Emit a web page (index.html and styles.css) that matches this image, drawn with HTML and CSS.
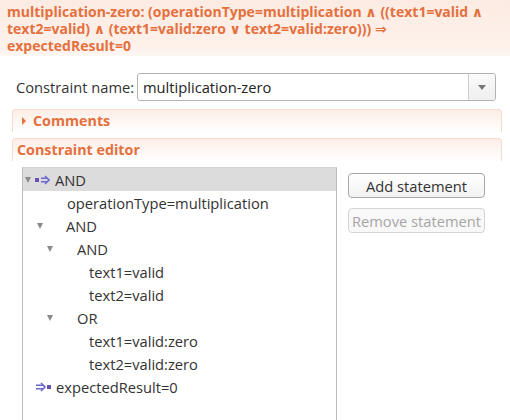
FILE: index.html
```html
<!DOCTYPE html>
<html>
<head>
<meta charset="utf-8">
<link rel="stylesheet" href="styles.css">
</head>
<body>
<div class="title">multiplication-zero: (operationType=multiplication ∧ ((text1=valid ∧ text2=valid) ∧ (text1=valid:zero ∨ text2=valid:zero))) ⇒ expectedResult=0</div>
<div class="content">
  <div class="name-row">
    <span class="label">Constraint name:</span>
    <div class="combo">
      <span class="combo-text">multiplication-zero</span>
      <span class="combo-btn"><span class="combo-arrow"></span></span>
    </div>
  </div>
  <div class="section">
    <span class="twisty"></span><span class="section-title">Comments</span>
  </div>
  <div class="section section-editor">
    <span class="section-title">Constraint editor</span>
  </div>
  <div class="editor">
    <div class="tree">
      <div class="row selected lvl0">
        <span class="tri"></span>
        <svg class="icon" width="16" height="10" viewBox="0 0 16 10"><rect x="0" y="3" width="4" height="4" fill="#6a4fb0"/><path d="M6 3.2h6M6 6.8h6" stroke="#6868d0" stroke-width="1.6"/><path d="M10 1l4 4-4 4" fill="none" stroke="#6868d0" stroke-width="1.6"/></svg>
        <span class="txt">AND</span>
      </div>
      <div class="row"><span class="txt ind67">operationType=multiplication</span></div>
      <div class="row lvl1"><span class="tri"></span><span class="txt">AND</span></div>
      <div class="row lvl2"><span class="tri"></span><span class="txt">AND</span></div>
      <div class="row"><span class="txt ind89">text1=valid</span></div>
      <div class="row"><span class="txt ind89">text2=valid</span></div>
      <div class="row lvl2"><span class="tri"></span><span class="txt">OR</span></div>
      <div class="row"><span class="txt ind89">text1=valid:zero</span></div>
      <div class="row"><span class="txt ind89">text2=valid:zero</span></div>
      <div class="row lvl0b">
        <svg class="icon" width="16" height="10" viewBox="0 0 16 10"><path d="M0 3.2h7M0 6.8h7" stroke="#6868d0" stroke-width="1.6"/><path d="M5 1l4 4-4 4" fill="none" stroke="#6868d0" stroke-width="1.6"/><rect x="11" y="3" width="4" height="4" fill="#6a4fb0"/></svg>
        <span class="txt">expectedResult=0</span>
      </div>
    </div>
    <div class="buttons">
      <button class="btn">Add statement</button>
      <button class="btn disabled">Remove statement</button>
    </div>
  </div>
</div>
</body>
</html>
```
FILE: styles.css
```css
html, body {
  margin: 0;
  padding: 0;
  background: #ffffff;
  width: 510px;
  height: 420px;
  overflow: hidden;
  font-family: "Open Sans", "DejaVu Sans", sans-serif;
}
.title {
  background: linear-gradient(#fcebe2, #fdf1eb 85%, #fef7f3);
  color: #e4703e;
  font-weight: bold;
  font-size: 14px;
  line-height: 17px;
  padding: 3px 7px 2px 7px;
}
.content {
  padding: 17px 8px 0 12px;
}
.name-row {
  display: flex;
  align-items: center;
  gap: 6px;
  padding-left: 4px;
  height: 28px;
  margin-bottom: 8px;
}
.label {
  font-size: 14.7px;
  line-height: 20px;
  color: #333;
  width: 115px;
  white-space: nowrap;
}
.combo {
  display: flex;
  width: 357px;
  height: 26px;
  border: 1px solid #b3b3b3;
  border-radius: 3px;
  background: #fff;
}
.combo-text {
  flex: 1;
  font-size: 14.7px;
  color: #222;
  line-height: 26px;
  padding-left: 5px;
}
.combo-btn {
  width: 26px;
  border-left: 1px solid #cfcfcf;
  display: flex;
  align-items: center;
  justify-content: center;
  background: linear-gradient(#fafafa, #efefef);
  border-radius: 0 3px 3px 0;
}
.combo-arrow {
  width: 0; height: 0;
  border-left: 4px solid transparent;
  border-right: 4px solid transparent;
  border-top: 5px solid #777;
}
.section {
  width: 488px;
  height: 22px;
  border: 1px solid #f6dccf;
  border-bottom: none;
  border-radius: 4px 4px 0 0;
  background: linear-gradient(#fdeee6, #fff);
  display: flex;
  align-items: center;
  margin-bottom: 6px;
}
.twisty {
  width: 0; height: 0;
  border-top: 4px solid transparent;
  border-bottom: 4px solid transparent;
  border-left: 4px solid #e4703e;
  margin-left: 9px;
  margin-right: 7px;
}
.section-title {
  color: #e4703e;
  font-weight: bold;
  font-size: 14.3px;
  line-height: 20px;
}
.section-editor .section-title {
  margin-left: 4px;
}
.editor {
  display: flex;
  padding-left: 10px;
  margin-top: 2px;
}
.tree {
  width: 313px;
  height: 260px;
  border-left: 1px solid #bdbdbd;
  border-top: 1px solid #d3d3d3;
  border-right: 1px solid #bdbdbd;
}
.row {
  height: 23px;
  display: flex;
  align-items: center;
  font-size: 14.7px;
  color: #333;
  white-space: nowrap;
}
.selected {
  background: #dcdcdc;
}
.tri {
  width: 0; height: 0;
  border-left: 3.5px solid transparent;
  border-right: 3.5px solid transparent;
  border-top: 6px solid #8a8a8a;
}
.lvl0 .tri { margin-left: 2px; margin-right: 4px; }
.lvl0 .icon { margin-right: 4px; }
.lvl1 .tri { margin-left: 14px; margin-right: 23px; }
.lvl2 .tri { margin-left: 24px; margin-right: 24px; }
.lvl0b .icon { margin-left: 13px; margin-right: 4px; }
.ind67 { margin-left: 44px; }
.ind89 { margin-left: 66px; }
.buttons {
  display: flex;
  flex-direction: column;
  gap: 10px;
  margin-left: 11px;
  padding-top: 6px;
}
.btn {
  width: 137px;
  height: 25px;
  border: 1px solid #a8a8a8;
  border-radius: 4px;
  background: linear-gradient(#ffffff, #f2f2f2);
  font-family: "Open Sans", "DejaVu Sans", sans-serif;
  font-size: 14.7px;
  color: #333;
  padding: 0;
  white-space: nowrap;
}
.btn.disabled {
  border-color: #d4d4d4;
  color: #a6a6a6;
  background: #f8f8f8;
}
```
